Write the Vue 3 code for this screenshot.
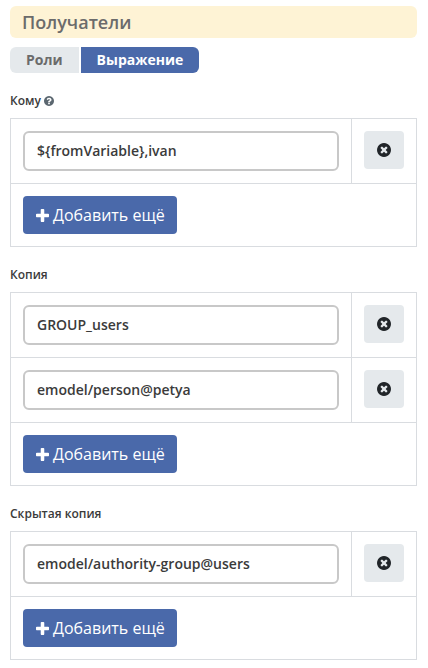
<script setup>
import { ref } from 'vue'

const mode = ref('expression')

const modes = [
  { id: 'roles', title: 'Роли' },
  { id: 'expression', title: 'Выражение' },
]

const groups = ref([
  { id: 'to', label: 'Кому', hint: true, items: ['${fromVariable},ivan'] },
  { id: 'cc', label: 'Копия', hint: false, items: ['GROUP_users', 'emodel/person@petya'] },
  { id: 'bcc', label: 'Скрытая копия', hint: false, items: ['emodel/authority-group@users'] },
])
</script>

<template>
  <main class="panel">
    <h2 class="title">Получатели</h2>

    <div class="tabs">
      <button
        v-for="m in modes"
        :key="m.id"
        type="button"
        class="tab"
        :class="{ active: mode === m.id }"
        :aria-pressed="mode === m.id"
        @click="mode = m.id"
      >{{ m.title }}</button>
    </div>

    <section v-for="group in groups" :key="group.id" class="group">
      <label class="label" :for="`${group.id}-0`">
        {{ group.label }}
        <svg v-if="group.hint" class="hint" viewBox="128 128 1536 1536" aria-hidden="true">
          <path d="M1024 1376v-192q0-14-9-23t-23-9h-192q-14 0-23 9t-9 23v192q0 14 9 23t23 9h192q14 0 23-9t9-23zm256-672q0-88-55.5-163t-138.5-116-170-41q-243 0-371 213-15 24 8 42l132 100q7 6 19 6 16 0 25-12 53-68 86-92 34-24 86-24 48 0 85.5 26t37.5 59q0 38-20 61t-68 45q-63 28-115.5 86.5t-52.5 125.5v36q0 14 9 23t23 9h192q14 0 23-9t9-23q0-19 21.5-49.5t54.5-49.5q32-18 49-28.5t46-35 44.5-48 28-60.5 12.5-81zm384 192q0 209-103 385.5t-279.5 279.5-385.5 103-385.5-103-279.5-279.5-103-385.5 103-385.5 279.5-279.5 385.5-103 385.5 103 279.5 279.5 103 385.5z" />
        </svg>
      </label>

      <table class="grid">
        <tbody>
          <tr v-for="(item, i) in group.items" :key="i">
            <td>
              <input :id="`${group.id}-${i}`" v-model="group.items[i]" class="field" type="text" :aria-label="group.label" spellcheck="false" />
            </td>
            <td class="actions">
              <button type="button" class="remove" aria-label="Удалить" @click="group.items.splice(i, 1)">
                <svg viewBox="128 128 1536 1536" aria-hidden="true">
                  <path d="M1277 1122q0-26-19-45l-181-181 181-181q19-19 19-45 0-27-19-46l-90-90q-19-19-46-19-26 0-45 19l-181 181-181-181q-19-19-45-19-27 0-46 19l-90 90q-19 19-19 46 0 26 19 45l181 181-181 181q-19 19-19 45 0 27 19 46l90 90q19 19 46 19 26 0 45-19l181-181 181 181q19 19 45 19 27 0 46-19l90-90q19-19 19-46zm387-226q0 209-103 385.5t-279.5 279.5-385.5 103-385.5-103-279.5-279.5-103-385.5 103-385.5 279.5-279.5 385.5-103 385.5 103 279.5 279.5 103 385.5z" />
                </svg>
              </button>
            </td>
          </tr>
          <tr>
            <td colspan="2">
              <button type="button" class="add" @click="group.items.push('')">
                <svg viewBox="192 128 1408 1408" aria-hidden="true">
                  <path d="M1600 736v192q0 40-28 68t-68 28h-416v416q0 40-28 68t-68 28h-192q-40 0-68-28t-28-68v-416h-416q-40 0-68-28t-28-68v-192q0-40 28-68t68-28h416v-416q0-40 28-68t68-28h192q40 0 68 28t28 68v416h416q40 0 68 28t28 68z" />
                </svg>
                Добавить ещё
              </button>
            </td>
          </tr>
        </tbody>
      </table>
    </section>
  </main>
</template>

<style>
body {
  background: #fff;
}
</style>

<style scoped>
.panel {
  padding: 6px 11px 8px 10px;
  font-family: "Open Sans", "Noto Sans", sans-serif;
  color: #3b3b3b;
}

.panel *,
.panel {
  box-sizing: border-box;
}

button,
input {
  font-family: inherit;
  margin: 0;
}

button {
  border: 0;
  cursor: pointer;
}

.title {
  margin: 0 0 9px;
  padding: 0 12px;
  border-radius: 6px;
  background: #fef3d5;
  color: #6b6b6b;
  font-size: 18px;
  font-weight: 600;
  line-height: 32px;
}

.tabs {
  display: flex;
  gap: 2px;
}

.tab {
  height: 26px;
  padding: 0 16px;
  background: #e5e9ec;
  color: #6b6b6b;
  font-size: 14px;
  font-weight: 700;
  line-height: 26px;
}

.tab:first-child {
  border-radius: 6px 0 0 6px;
}

.tab:last-child {
  border-radius: 0 6px 6px 0;
}

.tab.active {
  background: #4a69aa;
  color: #fff;
}

.group {
  padding-top: 19px;
}

.label {
  display: flex;
  align-items: center;
  gap: 3px;
  margin-bottom: 8px;
  font-size: 12px;
  font-weight: 600;
  line-height: 18px;
}

.hint {
  width: 10px;
  height: 10px;
  fill: #5b6770;
}

.grid {
  width: 100%;
  border-collapse: separate;
  border-spacing: 0;
  border: solid #d9dce0;
  border-width: 1px 0 0 1px;
}

.grid td {
  padding: 12px;
  border: solid #d9dce0;
  border-width: 0 1px 1px 0;
  vertical-align: top;
}

.grid .actions {
  width: 65px;
}

.field {
  display: block;
  width: 100%;
  height: 40px;
  padding: 0 12px 2px;
  border: 2px solid #c8c8c8;
  border-radius: 6px;
  background: #fff;
  color: #3b3b3b;
  font-size: 14px;
  font-weight: 600;
}

.remove {
  display: flex;
  align-items: center;
  justify-content: center;
  width: 40px;
  height: 38px;
  padding: 0;
  border-radius: 4px;
  background: #e5e9ec;
}

.remove svg {
  width: 14px;
  height: 14px;
  fill: #212529;
}

.add {
  display: flex;
  align-items: center;
  gap: 4px;
  height: 38px;
  padding: 0 12px 0 13px;
  border-radius: 4px;
  background: #4a69aa;
  color: #fff;
  font-size: 16px;
  line-height: 24px;
}

.add svg {
  width: 13px;
  height: 13px;
  fill: currentColor;
}
</style>
